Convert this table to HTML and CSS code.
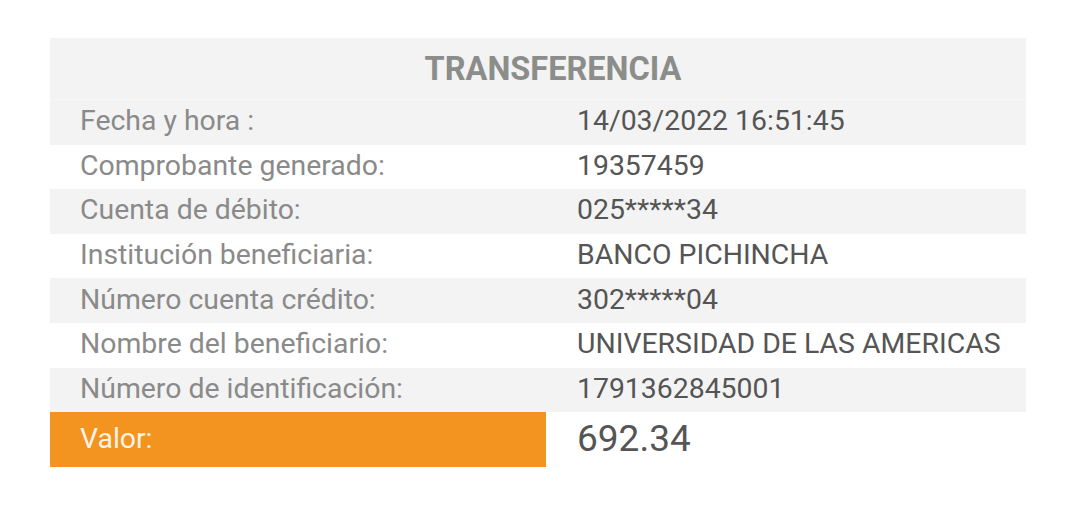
FILE: index.html
```html
<!DOCTYPE html>
<html lang="es">
<head>
<meta charset="utf-8">
<link rel="stylesheet" href="styles.css">
</head>
<body>
<div class="card">
  <div class="title">TRANSFERENCIA</div>
  <div class="row alt"><div class="label">Fecha y hora :</div><div class="value">14/03/2022 16:51:45</div></div>
  <div class="row"><div class="label">Comprobante generado:</div><div class="value">19357459</div></div>
  <div class="row alt"><div class="label">Cuenta de débito:</div><div class="value">025*****34</div></div>
  <div class="row"><div class="label">Institución beneficiaria:</div><div class="value">BANCO PICHINCHA</div></div>
  <div class="row alt"><div class="label">Número cuenta crédito:</div><div class="value">302*****04</div></div>
  <div class="row"><div class="label">Nombre del beneficiario:</div><div class="value">UNIVERSIDAD DE LAS AMERICAS</div></div>
  <div class="row alt"><div class="label">Número de identificación:</div><div class="value">1791362845001</div></div>
  <div class="row total"><div class="label">Valor:</div><div class="value">692.34</div></div>
</div>
</body>
</html>
```
FILE: styles.css
```css
html, body {
  margin: 0;
  padding: 0;
  background: #ffffff;
}
body {
  font-family: Roboto, "Liberation Sans", sans-serif;
  padding: 38px 0 0 50px;
}
.card {
  width: 976px;
}
.title {
  height: 62px;
  background: #f3f3f3;
  color: #8b8d8b;
  font-weight: 700;
  font-size: 32.5px;
  display: flex;
  align-items: center;
  justify-content: center;
  padding-left: 30px;
  box-sizing: border-box;
  border-bottom: 1px solid #f7f7f7;
}
.row {
  display: grid;
  grid-template-columns: 496px 1fr;
  height: 44.6px;
  align-items: center;
  font-size: 28.4px;
}
.row.alt {
  background: #f3f3f3;
}
.label {
  padding-left: 30px;
  padding-bottom: 3px;
  color: #8a8a8a;
}
.value {
  padding-left: 31px;
  padding-bottom: 3px;
  color: #555555;
}
.row.total {
  height: 55px;
  align-items: stretch;
}
.total .label {
  background: #f39320;
  color: #fdf3e6;
  display: flex;
  align-items: center;
}
.total .value {
  display: flex;
  align-items: center;
  font-size: 37px;
}
```
